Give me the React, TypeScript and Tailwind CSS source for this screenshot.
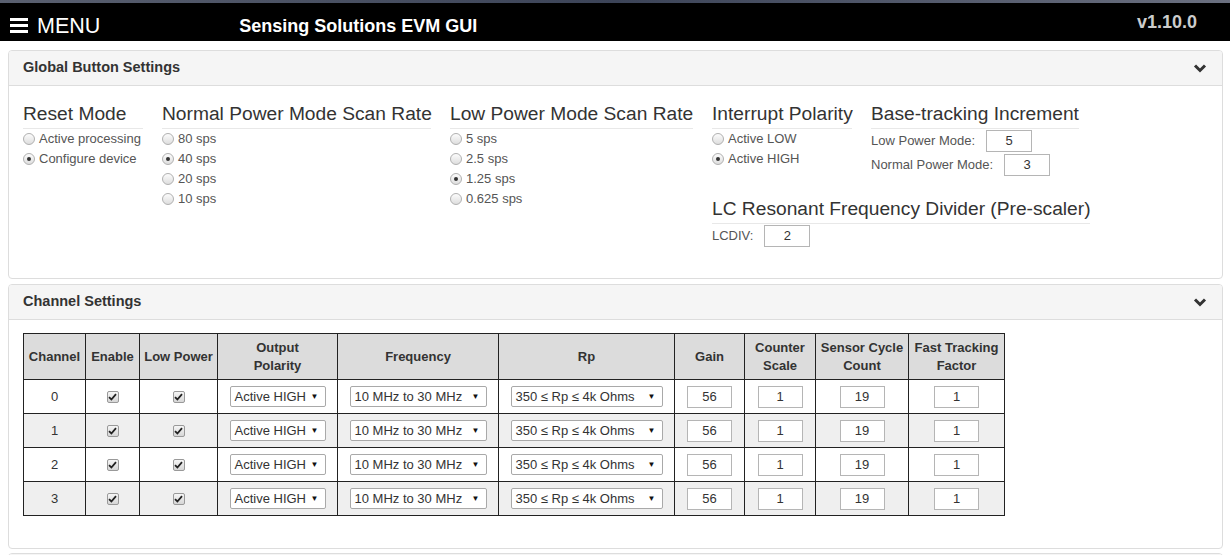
import React from 'react';

const font = { fontFamily: '"Liberation Sans", Arial, sans-serif' };

function Radio({ checked, label }: { checked?: boolean; label: string }) {
  return (
    <div className="flex h-[20px] items-center gap-[4px] text-[13px] text-[#555]">
      <span className="flex h-[12px] w-[12px] items-center justify-center rounded-full border border-[#b0b0b0] bg-gradient-to-b from-[#fcfcfc] to-[#dedede]">
        {checked && <span className="h-[4px] w-[4px] rounded-full bg-[#333]" />}
      </span>
      <span>{label}</span>
    </div>
  );
}

function Heading({ children }: { children: React.ReactNode }) {
  return (
    <div className="w-full whitespace-nowrap border-b border-[#e8e8e8] pb-[3px] text-[19.2px] leading-[22px] text-[#333]">
      {children}
    </div>
  );
}

function Box({ value, w = 'w-[46px]' }: { value: string; w?: string }) {
  return (
    <div className={`${w} flex h-[22px] items-center justify-center border border-[#b5b5b5] bg-white text-[13px] text-[#333]`}>
      {value}
    </div>
  );
}

function Chevron() {
  return (
    <svg width="14" height="10" viewBox="0 0 14 10">
      <path d="M2 2.5 L7 7.5 L12 2.5" fill="none" stroke="#333" strokeWidth="3" strokeLinejoin="miter" />
    </svg>
  );
}

function Check() {
  return (
    <span className="inline-flex h-[12px] w-[12px] items-center justify-center rounded-[2px] border border-[#999] bg-gradient-to-b from-[#f6f6f6] to-[#d6d6d6] align-middle">
      <svg width="9" height="8" viewBox="0 0 9 8">
        <path d="M1 4.2 L3.4 6.5 L8 1.2" fill="none" stroke="#222" strokeWidth="1.8" />
      </svg>
    </span>
  );
}

function Select({ value, w }: { value: string; w: string }) {
  return (
    <div className={`${w} mx-auto flex h-[21px] items-center justify-between rounded-[2px] border border-[#a9a9a9] bg-white pl-[4px] pr-[6px] text-[13px] text-[#333]`}>
      <span className="whitespace-nowrap">{value}</span>
      <span className="text-[8px] text-[#111]">▼</span>
    </div>
  );
}

function PanelHead({ title }: { title?: string }) {
  return (
    <div className="flex h-[35px] items-center justify-between border-b border-[#ddd] bg-[#f5f5f5] pl-[14px] pr-[15px]">
      <span className="text-[14.5px] font-bold text-[#333]">{title}</span>
      {title && <Chevron />}
    </div>
  );
}

const heads = [
  { t: ['Channel'], w: 'w-[62px]' },
  { t: ['Enable'], w: 'w-[54px]' },
  { t: ['Low Power'], w: 'w-[78px]' },
  { t: ['Output', 'Polarity'], w: 'w-[120px]' },
  { t: ['Frequency'], w: 'w-[161px]' },
  { t: ['Rp'], w: 'w-[176px]' },
  { t: ['Gain'], w: 'w-[70px]' },
  { t: ['Counter', 'Scale'], w: 'w-[71px]' },
  { t: ['Sensor Cycle', 'Count'], w: 'w-[93px]' },
  { t: ['Fast Tracking', 'Factor'], w: 'w-[96px]' },
];

export default function App() {
  const td = 'h-[34px] border border-[#222] text-center align-middle';
  return (
    <div className="h-[555px] w-full overflow-hidden bg-white" style={font}>
      {/* top bar */}
      <div className="h-[3px] bg-gradient-to-r from-[#5a6070] via-[#3c4458] to-[#6b7080]" />
      <div className="flex h-[38px] items-center bg-black pl-[10px] text-white">
        <svg width="18" height="16" viewBox="0 0 18 16" className="mt-[6px]">
          <rect x="0" y="1" width="18" height="3" fill="#fff" />
          <rect x="0" y="7" width="18" height="3" fill="#fff" />
          <rect x="0" y="13" width="18" height="3" fill="#fff" />
        </svg>
        <span className="ml-[9px] mt-[10px] text-[21.5px] leading-none">MENU</span>
        <span className="ml-[139px] mt-[8px] text-[18px] font-bold leading-none">Sensing Solutions EVM GUI</span>
        <span className="ml-auto mr-[33px] text-[18px] font-bold leading-none text-[#ccc]">v1.10.0</span>
      </div>

      <div className="pl-[8px] pr-[7px] pt-[9px]">
        {/* Global Button Settings */}
        <div className="mb-[5px] overflow-hidden rounded-[4px] border border-[#ddd]">
          <PanelHead title="Global Button Settings" />
          <div className="flex gap-[19px] pb-[31px] pl-[14px] pt-[17px]">
            <div className="w-[120px]">
              <Heading>Reset Mode</Heading>
              <Radio label="Active processing" />
              <Radio label="Configure device" checked />
            </div>
            <div className="w-[269px]">
              <Heading>Normal Power Mode Scan Rate</Heading>
              <Radio label="80 sps" />
              <Radio label="40 sps" checked />
              <Radio label="20 sps" />
              <Radio label="10 sps" />
            </div>
            <div className="w-[243px]">
              <Heading>Low Power Mode Scan Rate</Heading>
              <Radio label="5 sps" />
              <Radio label="2.5 sps" />
              <Radio label="1.25 sps" checked />
              <Radio label="0.625 sps" />
            </div>
            <div className="flex flex-col">
              <div className="flex gap-[19px]">
                <div className="w-[140px]">
                  <Heading>Interrupt Polarity</Heading>
                  <Radio label="Active LOW" />
                  <Radio label="Active HIGH" checked />
                </div>
                <div className="w-[208px]">
                  <Heading>Base-tracking Increment</Heading>
                  <div className="mt-[1px] flex flex-col gap-[2px] text-[13px] text-[#555]">
                    <div className="flex h-[22px] items-center gap-[11px]">
                      <span>Low Power Mode:</span>
                      <Box value="5" />
                    </div>
                    <div className="flex h-[22px] items-center gap-[11px]">
                      <span>Normal Power Mode:</span>
                      <Box value="3" />
                    </div>
                  </div>
                </div>
              </div>
              <div className="mt-[22px] w-[378px]">
                <Heading>LC Resonant Frequency Divider (Pre-scaler)</Heading>
                <div className="mt-[1px] flex h-[22px] items-center gap-[11px] text-[13px] text-[#555]">
                  <span>LCDIV:</span>
                  <Box value="2" />
                </div>
              </div>
            </div>
          </div>
        </div>

        {/* Channel Settings */}
        <div className="mb-[4px] overflow-hidden rounded-[4px] border border-[#ddd]">
          <PanelHead title="Channel Settings" />
          <div className="pb-[32px] pl-[14px] pt-[13px]">
            <table className="table-fixed border-collapse border border-[#222] text-[13px] text-[#333]">
              <thead>
                <tr className="bg-[#dcdcdc]">
                  {heads.map((h) => (
                    <th key={h.t.join()} className={`${h.w} h-[46px] border border-[#222] text-center align-middle font-bold leading-[18px]`}>
                      {h.t.map((l) => (
                        <div key={l} className="whitespace-nowrap">{l}</div>
                      ))}
                    </th>
                  ))}
                </tr>
              </thead>
              <tbody>
                {[0, 1, 2, 3].map((ch) => (
                  <tr key={ch} className={ch % 2 ? 'bg-[#efefef]' : 'bg-white'}>
                    <td className={td}>{ch}</td>
                    <td className={td}><Check /></td>
                    <td className={td}><Check /></td>
                    <td className={td}><Select value="Active HIGH" w="w-[96px]" /></td>
                    <td className={td}><Select value="10 MHz to 30 MHz" w="w-[137px]" /></td>
                    <td className={td}><Select value="350 ≤ Rp ≤ 4k Ohms" w="w-[152px]" /></td>
                    <td className={td}><div className="flex justify-center"><Box value="56" w="w-[45px]" /></div></td>
                    <td className={td}><div className="flex justify-center"><Box value="1" w="w-[45px]" /></div></td>
                    <td className={td}><div className="flex justify-center"><Box value="19" w="w-[45px]" /></div></td>
                    <td className={td}><div className="flex justify-center"><Box value="1" w="w-[45px]" /></div></td>
                  </tr>
                ))}
              </tbody>
            </table>
          </div>
        </div>

        {/* next panel, cut off by the window */}
        <div className="overflow-hidden rounded-[4px] border border-[#ddd]">
          <PanelHead />
        </div>
      </div>
    </div>
  );
}
